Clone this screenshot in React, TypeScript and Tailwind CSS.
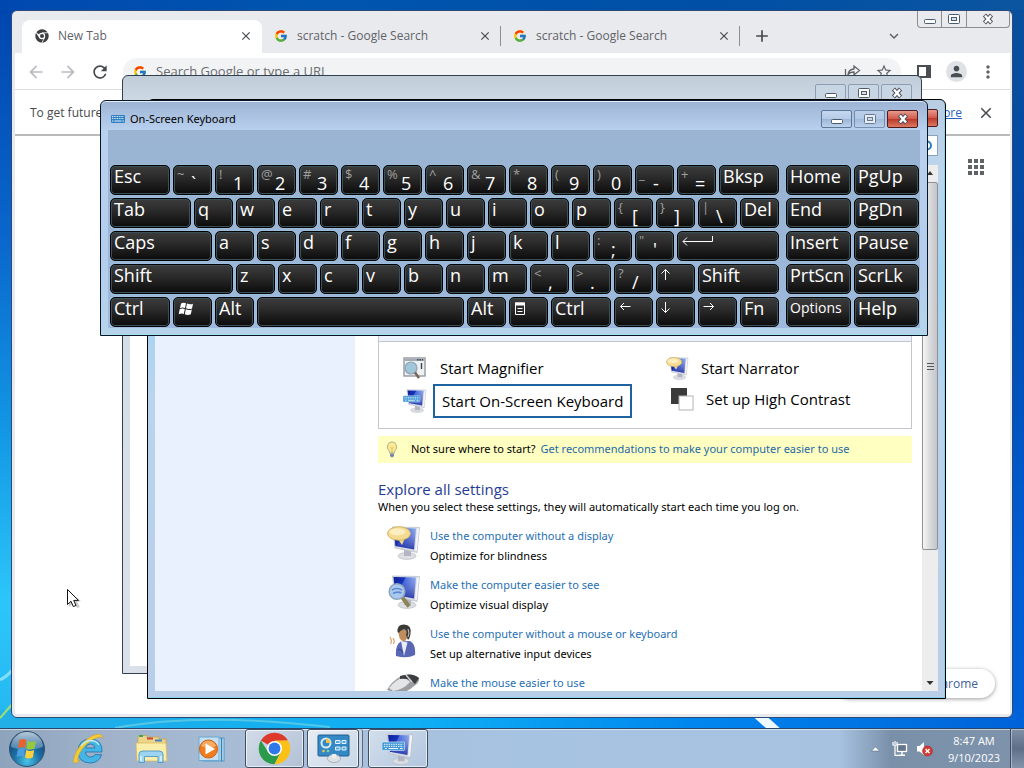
import React from "react";
import { FcGoogle } from "react-icons/fc";
import {
  MdAdd,
  MdApps,
  MdArrowBack,
  MdArrowForward,
  MdClose,
  MdExpandMore,
  MdMoreVert,
  MdPerson,
  MdRefresh,
  MdStarBorder,
} from "react-icons/md";

type KeySpec = {
  label?: string;
  shift?: string;
  icon?: React.ReactNode;
  name?: string;
  span?: string;
  small?: boolean;
};

/* ---------- drawings ---------- */

function Wallpaper() {
  return (
    <svg className="absolute inset-0 h-full w-full" viewBox="0 0 1024 768" preserveAspectRatio="none" aria-hidden="true">
      <defs>
        <linearGradient id="skyTop" x1="0" x2="1" y1="0" y2="0">
          <stop offset="0" stopColor="#0048b0" />
          <stop offset="0.3" stopColor="#0055ae" />
          <stop offset="0.7" stopColor="#004fa6" />
          <stop offset="1" stopColor="#0b55a0" />
        </linearGradient>
        <linearGradient id="skyLeft" x1="0" x2="0" y1="0" y2="1">
          <stop offset="0" stopColor="#0046ae" />
          <stop offset="0.3" stopColor="#0a66cc" />
          <stop offset="0.55" stopColor="#1296e4" />
          <stop offset="0.78" stopColor="#2cc6fa" />
          <stop offset="1" stopColor="#22b2ee" />
        </linearGradient>
        <linearGradient id="skyRight" x1="0" x2="0" y1="0" y2="1">
          <stop offset="0" stopColor="#0a4f9c" />
          <stop offset="0.3" stopColor="#0049a8" />
          <stop offset="0.7" stopColor="#005bd0" />
          <stop offset="1" stopColor="#0062d8" />
        </linearGradient>
        <linearGradient id="skyBottom" x1="0" x2="1" y1="0" y2="0">
          <stop offset="0" stopColor="#22aee6" />
          <stop offset="0.4" stopColor="#0fb0f4" />
          <stop offset="0.68" stopColor="#0086ee" />
          <stop offset="1" stopColor="#0062d8" />
        </linearGradient>
      </defs>
      <rect width="1024" height="768" fill="url(#skyTop)" />
      <rect y="10" width="16" height="758" fill="url(#skyLeft)" />
      <rect x="1004" y="10" width="20" height="758" fill="url(#skyRight)" />
      <rect y="710" width="1024" height="58" fill="url(#skyBottom)" />
      <path d="M0 680 Q8 676 14 668" stroke="#a8ecff" strokeWidth="3" fill="none" opacity=".7" />
      <path d="M0 718 L14 702" stroke="#9fe070" strokeWidth="2" fill="none" />
      <path d="M115 728 Q200 712 330 727" stroke="#8fe0e0" strokeWidth="2" fill="none" opacity=".5" />
      <path d="M748 712 L762 712 L782 730 L768 730Z" fill="#eef8ff" />
    </svg>
  );
}

function ChromeLogo({ size, mono }: { size: number; mono?: boolean }) {
  const red = mono ? "#3c4043" : "#dd3a2c";
  const green = mono ? "#3c4043" : "#2b9a4b";
  const yellow = mono ? "#3c4043" : "#fbc116";
  return (
    <svg width={size} height={size} viewBox="0 0 48 48" aria-hidden="true">
      <path d="M24 24 L4.1 12.5 A23 23 0 0 1 43.9 12.5 L24 13.5Z" fill={red} />
      <path d="M4.1 12.5 A23 23 0 0 0 24 47 L33.1 29.3 L24 34 L15 29.3Z" fill={green} />
      <path d="M43.9 12.5 A23 23 0 0 1 24 47 L33.1 29.3 L34 22 L24 12.5Z" fill={yellow} />
      {mono && (
        <path d="M24 13 H45 M15 29 L4 11 M33 29 L23 48" stroke="#fff" strokeWidth="2.5" fill="none" />
      )}
      <circle cx="24" cy="24" r="11" fill="#fff" />
      <circle cx="24" cy="24" r={mono ? 7 : 8.6} fill={mono ? "#3c4043" : "#2f78ea"} />
    </svg>
  );
}

function MonitorShape() {
  return (
    <>
      <defs>
        <linearGradient id="screen" x1="0" x2="1" y1="0" y2=".5">
          <stop offset="0" stopColor="#0b1c94" />
          <stop offset=".42" stopColor="#1733bc" />
          <stop offset=".46" stopColor="#4f74e0" />
          <stop offset="1" stopColor="#b9cdf8" />
        </linearGradient>
        <linearGradient id="screenFoot" x1="0" x2="0" y1="0" y2="1">
          <stop offset="0" stopColor="#2038b4" stopOpacity="0" />
          <stop offset="1" stopColor="#12239c" stopOpacity=".85" />
        </linearGradient>
      </defs>
      <ellipse cx="20" cy="30" rx="9" ry="3.4" fill="#dcdee3" stroke="#b3b6bf" strokeWidth=".6" />
      <path d="M17 23 L24 25 L24 30 L17 30Z" fill="#b2b6c2" />
      <path d="M5.500 1 L32.500 1.500 L30 26.500 L8 22Z" fill="#d7dbe4" stroke="#b6bbc8" strokeWidth=".7" />
      <path d="M6.500 2 L29 2.500 L27 23.500 L8.500 20Z" fill="url(#screen)" />
      <path d="M6.500 2 L29 2.500 L27 23.500 L8.500 20Z" fill="url(#screenFoot)" />
      <path d="M30 2.500 L32 2.500 L29.800 25 L28 24.500Z" fill="#f4f5f8" />
    </>
  );
}

function SpeechMonitor({ size }: { size: number }) {
  return (
    <svg width={size} height={size} viewBox="0 0 34 34" aria-hidden="true">
      <MonitorShape />
      <path d="M11 13 L15 19 L18 12Z" fill="#f4d98a" />
      <ellipse cx="12" cy="7.500" rx="11.500" ry="6.800" fill="#f6dc92" stroke="#c9a650" strokeWidth=".8" />
      <ellipse cx="10.500" cy="5.800" rx="8" ry="3.400" fill="#fbeec0" />
    </svg>
  );
}

function LensMonitor({ size }: { size: number }) {
  return (
    <svg width={size} height={size} viewBox="0 0 34 34" aria-hidden="true">
      <MonitorShape />
      <path d="M15 22 L22 31.500" stroke="#8d8458" strokeWidth="4" />
      <circle cx="10" cy="16.500" r="7.800" fill="#a9c9ee" stroke="#8fa6bc" strokeWidth="1.600" />
      <path d="M5 15 Q10 12 15 15 M6 18.500 Q10 16 14.500 18" stroke="#5b87d0" strokeWidth="1.600" fill="none" />
    </svg>
  );
}

function KeyboardMonitor({ size }: { size: number }) {
  return (
    <svg width={size} height={size} viewBox="0 0 34 34" aria-hidden="true">
      <MonitorShape />
      <rect x="0" y="9.500" width="24" height="9" rx="1" fill="#3e97d8" stroke="#fff" strokeWidth=".6" />
      <path d="M2 12 H22.500 M2 14.200 H22.500" stroke="#fff" strokeWidth="1" strokeDasharray="1.600 .9" />
      <path d="M3 16.500 H5 M7 16.500 H17 M19 16.500 H22" stroke="#fff" strokeWidth="1" />
    </svg>
  );
}

function PersonIcon() {
  return (
    <svg width="34" height="34" viewBox="0 0 34 34" aria-hidden="true">
      <path d="M9 32 Q8 21 14 17.500 L23 17 Q29 20 28 31 Q20 35 9 32Z" fill="#5866b4" />
      <path d="M14 17 L17 32 L20.500 18.500Z" fill="#e8eefc" />
      <path d="M11.500 6 Q11 16 16.500 17.500 Q21 17 21.500 6Z" fill="#c08e5c" />
      <path d="M10.500 8 Q10 .5 17 .6 Q25 .8 23.500 10 Q23 14 21 16 L19 11 Q21 6 17 5.500 Q13 6 12 9Z" fill="#3b3a38" />
      <path d="M21 5 Q23 9 21 13" stroke="#c9c9c9" strokeWidth="1" fill="none" />
      <path d="M6 14 Q8 16.500 6.500 20 M3 13 Q5.500 17 3.500 20" stroke="#d9a56a" strokeWidth="1.200" fill="none" />
      <path d="M11 26 Q14 24 16 29" stroke="#3d4b96" strokeWidth="1.200" fill="none" />
    </svg>
  );
}

function MouseIcon() {
  return (
    <svg width="34" height="34" viewBox="0 0 34 34" aria-hidden="true">
      <path d="M0 17 Q4 9 14 3 Q26 -1 32 5 Q33 9 27 13 Q20 20 10 20Z" fill="#9b9da1" />
      <path d="M2 15 Q8 7 17 4 L23 9 Q16 17 6 18Z" fill="#e2e4e6" />
      <path d="M13 3 Q25 -1 32 5 L28 11 Q23 5 13 6Z" fill="#3c3e41" />
      <path d="M19 2 L25 9" stroke="#d8d8d8" strokeWidth="1.400" />
    </svg>
  );
}

function MagnifierIcon() {
  return (
    <svg width="24" height="22" viewBox="0 0 24 22" aria-hidden="true">
      <rect x="1" y="1" width="21" height="18" fill="#eef0f2" stroke="#949ba3" strokeWidth="1.4" />
      <path d="M2 3 H21" stroke="#a2aab4" strokeWidth="2" />
      <path d="M14 2.800 H20" stroke="#3f4a57" strokeWidth="1.4" strokeDasharray="1.500 1" />
      <path d="M18.500 6 V12" stroke="#39424e" strokeWidth="1.400" />
      <circle cx="8" cy="11" r="6" fill="#9fc6da" stroke="#8fa3b0" strokeWidth="1.200" />
      <path d="M12 15.500 L16 21" stroke="#77685c" strokeWidth="2.600" />
    </svg>
  );
}

function ContrastIcon() {
  return (
    <svg width="23" height="23" viewBox="0 0 23 23" aria-hidden="true">
      <rect x="0" y="0" width="16" height="16" fill="#3a3a3a" />
      <rect x="8" y="8" width="14" height="14" fill="#fff" stroke="#b4b4b4" />
    </svg>
  );
}

function BulbIcon() {
  return (
    <svg width="12" height="17" viewBox="0 0 12 17" aria-hidden="true">
      <path d="M6 .8 A5 5 0 0 1 9 9.500 L8.300 12 H3.700 L3 9.500 A5 5 0 0 1 6 .8Z" fill="#fbea94" stroke="#a9a88e" strokeWidth=".9" />
      <path d="M4.500 6 L6 8 L7.500 6 M6 8 V12" stroke="#d9b64a" strokeWidth=".8" fill="none" />
      <path d="M4 12.500 H8 V15 L6.800 16.300 H5.200 L4 15Z" fill="#7b86a8" />
    </svg>
  );
}

function KeyboardIcon() {
  return (
    <svg width="14" height="8" viewBox="0 0 14 8" aria-hidden="true">
      <rect width="14" height="8" rx="1" fill="#2f80c4" />
      <path d="M1 1.500 H13 M1 3.500 H13" stroke="#dff0fb" strokeWidth="1" strokeDasharray="1 .7" />
      <path d="M1 6 H2.500 M3.500 6 H10.500 M11.500 6 H13" stroke="#dff0fb" strokeWidth="1" />
    </svg>
  );
}

function StartOrb() {
  return (
    <svg width="38" height="38" viewBox="0 0 38 38" aria-hidden="true">
      <defs>
        <radialGradient id="orb" cx=".5" cy=".85" r=".85">
          <stop offset="0" stopColor="#49c4e8" />
          <stop offset=".45" stopColor="#1c6ea4" />
          <stop offset="1" stopColor="#123a66" />
        </radialGradient>
        <linearGradient id="gloss" x1="0" x2="0" y1="0" y2="1">
          <stop offset="0" stopColor="#e2eef8" stopOpacity=".8" />
          <stop offset="1" stopColor="#a8c8e0" stopOpacity=".35" />
        </linearGradient>
      </defs>
      <circle cx="19" cy="19" r="17.500" fill="url(#orb)" stroke="#31516f" />
      <path d="M3 17 A16 15 0 0 1 35 17 Q19 23 3 17Z" fill="url(#gloss)" />
      <path d="M11.500 10 Q15 8 18.300 10 L17 18 Q13.500 16 10 18Z" fill="#e8622c" />
      <path d="M19.700 10.500 Q23 13 28 11 L26.500 18.500 Q22 20.500 18.400 18.500Z" fill="#96c83c" />
      <path d="M9.800 19.500 Q13 17.600 16.800 19.500 L15.500 27 Q12 25 8.500 27Z" fill="#4b9fe0" />
      <path d="M18.200 20 Q22 22 26.200 20 L24.800 27.500 Q20.500 29.500 17 27.500Z" fill="#fbd03c" />
    </svg>
  );
}

function ExplorerE() {
  return (
    <svg width="34" height="34" viewBox="0 0 34 34" aria-hidden="true">
      <path
        d="M30 20 H13.500 Q14 25 18.500 25 Q21.500 25 23 22.700 H29.600 Q27 31 18 31 Q6 30.500 6 19 Q6.500 7.500 18 7 Q31 7.500 30 20Z M13.700 16 H23 Q22.500 12 18.500 12 Q14.300 12 13.700 16Z"
        fill="#45b5e6"
        stroke="#2578ac"
        strokeWidth=".9"
        fillRule="evenodd"
      />
      <path d="M6.500 29.500 Q0 34 2 26 Q5 13 19 4.500 Q30 -1 31 6.500 Q29 2.800 20 8 Q8 16 5.500 27 Q5.500 30 8 28Z" fill="#f4cc34" stroke="#d09c1c" strokeWidth=".5" />
      <path d="M9 14 Q13 8.500 19 8.500 Q25 9 27 13" stroke="#c0ecfc" strokeWidth="1.300" fill="none" />
    </svg>
  );
}

function FolderIcon() {
  return (
    <svg width="33" height="30" viewBox="0 0 33 30" aria-hidden="true">
      <path d="M3 4 V1.500 H12 V4 H15 V3 H24 V5 H31 V26 H2Z" fill="#ecd489" stroke="#c5a552" strokeWidth=".8" />
      <path d="M4 2 H8" stroke="#3aa65c" strokeWidth="2" />
      <path d="M12 4.500 H18" stroke="#cf4632" strokeWidth="2" />
      <path d="M20 6.500 H27" stroke="#3f85c8" strokeWidth="2" />
      <path d="M1 9 H31 L32 27 H2Z" fill="#fbedaa" stroke="#d8bb62" strokeWidth=".8" />
      <path d="M4 28.500 V20 Q4 17 8 17 H24 Q28 17 28 20 V28.500 H23 V22.500 H9.500 V28.500Z" fill="#9cd4f2" stroke="#4f98c4" strokeWidth=".9" />
      <path d="M6 22 V27 M26 22 V27" stroke="#e4f6ff" strokeWidth="1.500" />
    </svg>
  );
}

function MediaPlayer() {
  return (
    <svg width="28" height="26" viewBox="0 0 28 26" aria-hidden="true">
      <rect x="5" y="2" width="21" height="23" fill="#d2e6f4" stroke="#4f9ac8" />
      <path d="M23.500 2 V25" stroke="#2f83bc" strokeWidth="1.500" />
      <rect x="1" y="1" width="20" height="23.500" fill="#c3e0f4" stroke="#6aaad2" />
      <circle cx="10.500" cy="13" r="9" fill="#ee7d20" stroke="#d45f10" />
      <path d="M3 10 A8 8 0 0 1 18 10 Q11 14 3 10Z" fill="#f8ab62" />
      <path d="M7.500 7.500 L17 13 L7.500 18.500Z" fill="#fff" />
    </svg>
  );
}

function ControlPanelIcon() {
  return (
    <svg width="33" height="29" viewBox="0 0 33 29" aria-hidden="true">
      <rect x="1" y="1" width="31" height="21" rx="1" fill="#3489c4" stroke="#1d5f92" />
      <circle cx="9" cy="9" r="4.500" fill="none" stroke="#d8ecf8" strokeWidth="2" />
      <path d="M9 4.500 A4.500 4.500 0 0 1 13.500 9 H9Z" fill="#f3c14a" />
      <path d="M18.500 6.500 H23 V9.500 H18.500Z M25 6.500 H29 V9.500 H25Z M18.500 13 H23 V16 H18.500Z M25 13 H29 V16 H25Z" fill="#5aa9dc" stroke="#e3f2fb" strokeWidth="1" />
      <circle cx="6.500" cy="17" r="1.300" fill="#f3c14a" />
      <circle cx="11" cy="17" r="1.300" fill="#7fd0a4" />
      <ellipse cx="17" cy="24.500" rx="6.500" ry="4" fill="#dfe2e6" stroke="#9ba2aa" strokeWidth=".8" />
      <path d="M15 20 H19 V24 H15Z" fill="#eceef0" />
    </svg>
  );
}

function FlagGlyph() {
  return (
    <svg width="16" height="14" viewBox="0 0 16 14" aria-hidden="true">
      <path d="M3 1.500 Q5.500 0 8 1.200 L7 6 Q4.500 5 2 6.200Z M9 1.500 Q12 3 15 1.700 L14 6.500 Q11 7.600 8 6.300Z M1.700 7.200 Q4.500 6 6.800 7 L5.800 12 Q3.500 11 .7 12.200Z M7.800 7.300 Q10.500 8.600 13.800 7.500 L12.800 12.300 Q9.500 13.500 6.800 12.300Z" fill="#fff" />
    </svg>
  );
}

function MenuGlyph() {
  return (
    <svg width="12" height="14" viewBox="0 0 12 14" aria-hidden="true">
      <path d="M1.500 1 H10.500 V12.500 H1.500Z M3.500 6.500 H8.500 M3.500 9.500 H8.500" stroke="#fff" fill="none" />
      <path d="M1 .5 H11 V3.500 H1Z" fill="#fff" />
    </svg>
  );
}

function ArrowGlyph({ d, w = 12, h = 12 }: { d: string; w?: number; h?: number }) {
  return (
    <svg width={w} height={h} viewBox={`0 0 ${w} ${h}`} aria-hidden="true">
      <path d={d} stroke="#fff" fill="none" />
    </svg>
  );
}

function NetworkIcon() {
  return (
    <svg width="16" height="16" viewBox="0 0 16 16" aria-hidden="true">
      <rect x="5.500" y="3.500" width="9" height="7" fill="#64748a" stroke="#fff" strokeWidth="1.300" />
      <path d="M10 11 V14 M7 14.300 H13" stroke="#fff" strokeWidth="1.400" />
      <path d="M1 1 V4 H5 V1 M3 4 V14.300 H7 M3 0 V3" stroke="#fff" strokeWidth="1.200" fill="none" />
    </svg>
  );
}

function VolumeIcon() {
  return (
    <svg width="18" height="16" viewBox="0 0 18 16" aria-hidden="true">
      <path d="M1 5 H3.500 L8 1 V14 L3.500 10.500 H1Z" fill="#fff" />
      <circle cx="11.500" cy="10" r="5" fill="#d23a34" stroke="#b02020" strokeWidth=".5" />
      <path d="M9.500 8 L13.500 12 M13.500 8 L9.500 12" stroke="#fff" strokeWidth="1.500" />
    </svg>
  );
}

/* ---------- caption buttons ---------- */

function CaptionGlyph({ kind }: { kind: "min" | "max" | "close" }) {
  return (
    <svg width="14" height="12" viewBox="0 0 14 12" aria-hidden="true">
      {kind === "min" && <rect x="1.500" y="6.500" width="11" height="4" rx="1" fill="#fff" stroke="#4b5a6c" />}
      {kind === "max" && (
        <>
          <rect x="1.500" y="1.500" width="11" height="9" rx="1" fill="#fff" stroke="#4b5a6c" />
          <rect x="4.500" y="4.500" width="5" height="3" fill="#d9e2ec" stroke="#4b5a6c" />
        </>
      )}
      {kind === "close" && (
        <>
          <path d="M3.500 2 L10.500 10 M10.500 2 L3.500 10" stroke="#4b4f58" strokeWidth="4.200" />
          <path d="M4 2.500 L10 9.500 M10 2.500 L4 9.500" stroke="#fff" strokeWidth="2.400" />
        </>
      )}
    </svg>
  );
}

function CaptionButtons({ active, owner }: { active?: boolean; owner: string }) {
  const plain = active
    ? "border-[#5d7799] bg-[linear-gradient(#c6d8f0,#b4cae6_50%,#9db6d6_51%,#bcd2ec)]"
    : "border-[#8d9eb2] bg-[#c8d5e2]";
  const close = active
    ? "border-[#4d1a1e] bg-[linear-gradient(#e59a8c,#d2584a_50%,#b93a2a_51%,#dd7a62)]"
    : "border-[#8d9eb2] bg-[#c8d5e2]";
  const base = "flex h-[18px] w-[31px] items-center justify-center rounded-[2px] border";
  return (
    <div className="flex gap-[2px]">
      <button aria-label={`Minimize ${owner}`} className={`${base} ${plain}`}>
        <CaptionGlyph kind="min" />
      </button>
      <button aria-label={`Maximize ${owner}`} className={`${base} ${plain} ${active ? "opacity-70" : ""}`}>
        <CaptionGlyph kind="max" />
      </button>
      <button aria-label={`Close ${owner}`} className={`${base} ${close}`}>
        <CaptionGlyph kind="close" />
      </button>
    </div>
  );
}

/* ---------- browser ---------- */

function BrowserTab({ title, active }: { title: string; active?: boolean }) {
  return (
    <div
      className={
        active
          ? "flex h-[33px] w-[240px] items-center rounded-t-lg bg-white pr-[9px] pb-[2px] pl-[13px]"
          : "flex h-[33px] w-[238px] items-center pr-[8px] pb-[2px] pl-[12px]"
      }
    >
      {active ? <ChromeLogo size={14} mono /> : <FcGoogle size={14} />}
      <span className="ml-[9px] flex-1 text-[12px] text-[#5f6368]">{title}</span>
      <button aria-label={`Close tab ${title}`} className="text-[#45494d]">
        <MdClose size={14} />
      </button>
    </div>
  );
}

function Browser() {
  return (
    <section
      aria-label="Browser"
      className="absolute top-[10px] right-[11px] bottom-[50px] left-[11px] flex flex-col rounded-md border border-[#2a4a78] bg-[#e9eaee] font-['Open_Sans','Noto_Sans',sans-serif]"
    >
      <div className="flex h-[42px] shrink-0 items-end pl-[10px]">
        <BrowserTab title="New Tab" active />
        <BrowserTab title="scratch - Google Search" />
        <span className="mb-[7px] h-5 w-px bg-[#8b8f94]" />
        <BrowserTab title="scratch - Google Search" />
        <span className="mb-[7px] h-5 w-px bg-[#8b8f94]" />
        <button aria-label="New tab" className="mb-[7px] ml-[12px] text-[#45494d]">
          <MdAdd size={20} />
        </button>
        <span className="flex-1" />
        <button aria-label="Search tabs" className="mb-[8px] mr-[14px] text-[#5f6368]">
          <MdExpandMore size={18} />
        </button>
        <div className="mr-[2px] flex h-[17px] self-start rounded-b border border-t-0 border-[#8a8d92]">
          <button aria-label="Minimize browser" className="flex w-[24px] items-center justify-center border-r border-[#8a8d92]">
            <CaptionGlyph kind="min" />
          </button>
          <button aria-label="Maximize browser" className="flex w-[25px] items-center justify-center border-r border-[#8a8d92]">
            <CaptionGlyph kind="max" />
          </button>
          <button aria-label="Close browser" className="flex w-[42px] items-center justify-center">
            <CaptionGlyph kind="close" />
          </button>
        </div>
      </div>

      <div className="mr-[2px] mb-[3px] ml-[3px] flex min-h-0 flex-1 flex-col bg-white">
        <div className="flex h-[37px] shrink-0 items-center border-b border-[#dcdee1] pt-px pr-[12px] pl-[11px] text-[#5f6368]">
          <button aria-label="Back" className="text-[#b9bcc0]">
            <MdArrowBack size={20} />
          </button>
          <button aria-label="Forward" className="ml-[12px] text-[#b9bcc0]">
            <MdArrowForward size={20} />
          </button>
          <button aria-label="Reload" className="ml-[12px] text-[#45494d]">
            <MdRefresh size={20} />
          </button>
          <div className="ml-[13px] flex h-7 flex-1 items-center rounded-full bg-[#f1f3f4] pr-[8px] pl-[10px]">
            <FcGoogle size={14} />
            <input
              aria-label="Address and search bar"
              placeholder="Search Google or type a URL"
              className="ml-[9px] min-w-0 flex-1 bg-transparent text-[13px] placeholder:text-[#6a6e73]"
            />
            <button aria-label="Share">
              <svg width="17" height="16" viewBox="0 0 17 16" aria-hidden="true">
                <path d="M1.500 5 V14.500 H13 V11 M4 10.500 Q4.500 5.500 10 5 V2 L15.500 6.500 L10 11 V8 Q6 8 4 10.500Z" fill="none" stroke="#5f6368" strokeWidth="1.300" />
              </svg>
            </button>
            <button aria-label="Bookmark" className="ml-[14px]">
              <MdStarBorder size={18} />
            </button>
          </div>
          <button aria-label="Side panel" className="ml-[16px] flex h-[13px] w-[14px] border-[2px] border-r-[5px] border-[#4a4d51]" />
          <button aria-label="Profile" className="ml-[15px] flex h-[21px] w-[21px] items-center justify-center rounded-full bg-[#dee1e6] text-[#4a4d51]">
            <MdPerson size={17} />
          </button>
          <button aria-label="Menu" className="ml-[11px]">
            <MdMoreVert size={20} />
          </button>
        </div>
        <div className="flex h-[46px] shrink-0 items-center border-b-2 border-[#b9babc] pt-[2px] pr-[15px] pl-[15px] text-[12px] text-[#45494d]">
          <span className="flex-1">To get future</span>
          <a href="#learn" className="text-[#2a64bf] underline">
            Learn more
          </a>
          <button aria-label="Dismiss" className="ml-[15px] text-[#45494d]">
            <MdClose size={18} />
          </button>
        </div>
        <div className="flex flex-1 flex-col items-end justify-between pr-[15px] pb-[16px]">
          <button aria-label="Google apps" className="mt-[19px] mr-[7px] text-[#5f6368]">
            <MdApps size={24} />
          </button>
          <button className="h-[29px] rounded-full bg-white pr-[17px] pl-9 text-[12px] text-[#41609c] shadow-[0_1px_4px_rgba(0,0,0,0.4)]">
            Customize Chrome
          </button>
        </div>
      </div>
    </section>
  );
}

/* ---------- ease of access ---------- */

const settings: { title: string; note?: string; icon: React.ReactNode }[] = [
  { title: "Use the computer without a display", note: "Optimize for blindness", icon: <SpeechMonitor size={34} /> },
  { title: "Make the computer easier to see", note: "Optimize visual display", icon: <LensMonitor size={34} /> },
  { title: "Use the computer without a mouse or keyboard", note: "Set up alternative input devices", icon: <PersonIcon /> },
  { title: "Make the mouse easier to use", icon: <MouseIcon /> },
];

function EaseOfAccess() {
  return (
    <section
      aria-label="Ease of Access"
      className="absolute top-[99px] left-[147px] flex h-[600px] w-[799px] flex-col rounded-t-md border border-black bg-[linear-gradient(#b8cde2,#bcd6ee_12%,#9fd4f2_30%,#b9d4ee_50%,#b8cde8)] px-[7px] pb-[7px] font-['Noto_Sans','Open_Sans',sans-serif] text-[11px] shadow-[inset_-1px_-1px_0_#86d4ec]"
    >
      <div className="flex h-[35px] shrink-0 justify-end pt-[9px]">
        <CaptionButtons active owner="Ease of Access" />
      </div>
      <div className="flex h-[30px] shrink-0 justify-end">
        <div className="flex h-[21px] w-[180px] items-center justify-end border border-[#8aa4c0] bg-white pr-1">
          <svg width="12" height="12" viewBox="0 0 12 12" aria-hidden="true">
            <circle cx="6" cy="5.500" r="4" fill="none" stroke="#2d7ec0" strokeWidth="2" />
          </svg>
        </div>
      </div>
      <div className="flex min-h-0 flex-1 bg-white">
        <aside className="w-[200px] shrink-0 bg-[#e8f1fd]" />
        <main className="min-w-0 flex-1 overflow-hidden pr-[10px] pl-[23px]">
          <div className="mt-[19px] flex h-[245px] flex-col border border-[#c4c6cc]">
            <div className="h-[157px] shrink-0 border-b border-[#c4c6cc] bg-[#edf1fb]" />
            <div className="flex flex-1 pt-[10px] font-['Open_Sans','Noto_Sans',sans-serif] text-[15px] text-black">
              <div className="w-[287px] pl-[24px]">
                <button className="flex h-[32px] items-center gap-[13px]">
                  <MagnifierIcon />
                  <span>Start Magnifier</span>
                </button>
                <button className="flex h-[34px] items-center gap-[6px]">
                  <KeyboardMonitor size={24} />
                  <span className="flex h-[34px] items-center border-2 border-[#1e62a0] px-[7px]">Start On-Screen Keyboard</span>
                </button>
              </div>
              <div>
                <button className="flex h-[32px] items-center gap-[12px]">
                  <SpeechMonitor size={23} />
                  <span>Start Narrator</span>
                </button>
                <button className="ml-[5px] flex h-[30px] items-center gap-[12px]">
                  <ContrastIcon />
                  <span>Set up High Contrast</span>
                </button>
              </div>
            </div>
          </div>
          <div className="mt-[7px] flex h-[27px] items-center bg-[#ffffc2] pl-[8px]">
            <BulbIcon />
            <span className="ml-[13px]">Not sure where to start?</span>
            <a href="#recommend" className="ml-[5px] text-[#1c6aa4]">
              Get recommendations to make your computer easier to use
            </a>
          </div>
          <h2 className="mt-[16px] font-['Open_Sans','Noto_Sans',sans-serif] text-[15px] leading-5 text-[#1f3d94]">Explore all settings</h2>
          <p className="leading-4">When you select these settings, they will automatically start each time you log on.</p>
          <ul className="mt-[11px] pl-[9px]">
            {settings.map((s) => (
              <li key={s.title} className="flex h-[49px] gap-[9px]">
                {s.icon}
                <div>
                  <a href="#setting" className="block leading-5 text-[#1f70b4]">
                    {s.title}
                  </a>
                  {s.note && <p className="leading-5">{s.note}</p>}
                </div>
              </li>
            ))}
          </ul>
        </main>
        <div className="flex w-[16px] shrink-0 flex-col items-center bg-[#ededee]">
          <svg width="8" height="17" viewBox="0 0 8 17" aria-hidden="true">
            <path d="M1 10 L4 6 L7 10Z" fill="#333" />
          </svg>
          <div className="flex h-[368px] w-[16px] flex-col items-center justify-center gap-[2px] rounded-[2px] border border-[#8f9194] bg-[linear-gradient(90deg,#f6f6f6,#d9dadc_50%,#c4c5c9)]">
            <span className="h-px w-[7px] bg-[#55585c]" />
            <span className="h-px w-[7px] bg-[#55585c]" />
            <span className="h-px w-[7px] bg-[#55585c]" />
          </div>
          <span className="flex-1" />
          <svg width="8" height="17" viewBox="0 0 8 17" aria-hidden="true">
            <path d="M.5 7 L4 11 L7.500 7Z" fill="#333" />
          </svg>
        </div>
      </div>
    </section>
  );
}

/* ---------- on-screen keyboard ---------- */

const one = "col-span-2";
const letters = (s: string): KeySpec[] => s.split("").map((c) => ({ label: c }));
const pairs = (s: string): KeySpec[] => s.split(" ").map((p) => ({ shift: p[0], label: p[1] }));

const rows: KeySpec[][] = [
  [{ label: "Esc", span: "col-span-3" }, ...pairs("~` !1 @2 #3 $4 %5 ^6 &7 *8 (9 )0 _- +="), { label: "Bksp", span: "col-span-3" }],
  [{ label: "Tab", span: "col-span-4" }, ...letters("qwertyuiop"), ...pairs("{[ }] |\\"), { label: "Del" }],
  [
    { label: "Caps", span: "col-span-5" },
    ...letters("asdfghjkl"),
    ...pairs(":; \"'"),
    { name: "Enter", icon: <ArrowGlyph w={34} h={12} d="M30.500 0 V5.500 H1 M5 1.500 L1 5.500 L5 9.500" />, span: "col-span-5" },
  ],
  [
    { label: "Shift", span: "col-span-6" },
    ...letters("zxcvbnm"),
    ...pairs("<, >. ?/"),
    { name: "Up", icon: <ArrowGlyph d="M4.500 11 V.500 M.500 4.500 L4.500 .500 L8.500 4.500" /> },
    { label: "Shift", span: "col-span-4" },
  ],
  [
    { label: "Ctrl", span: "col-span-3" },
    { name: "Windows", icon: <FlagGlyph /> },
    { label: "Alt" },
    { name: "Space", span: "col-span-10" },
    { label: "Alt" },
    { name: "Application menu", icon: <MenuGlyph /> },
    { label: "Ctrl", span: "col-span-3" },
    { name: "Left", icon: <ArrowGlyph d="M11.500 4.500 H1.500 M5 1 L1.500 4.500 L5 8" /> },
    { name: "Down", icon: <ArrowGlyph d="M4.500 0 V10.500 M.500 6.500 L4.500 10.500 L8.500 6.500" /> },
    { name: "Right", icon: <ArrowGlyph d="M.5 4.500 H10.500 M7 1 L10.500 4.500 L7 8" /> },
    { label: "Fn" },
  ],
];

const sideKeys: KeySpec[] = [
  { label: "Home" },
  { label: "PgUp" },
  { label: "End" },
  { label: "PgDn" },
  { label: "Insert" },
  { label: "Pause" },
  { label: "PrtScn" },
  { label: "ScrLk" },
  { label: "Options", small: true },
  { label: "Help" },
];

function Key({ k, span }: { k: KeySpec; span: string }) {
  return (
    <button
      aria-label={k.name}
      className={`${span} flex h-[30px] min-w-0 items-start rounded-[5px] border border-black bg-[linear-gradient(#3c3c3c,#2b2b2b_40%,#0b0b0b)] pl-[3px] text-[18px] leading-[20px] text-white shadow-[inset_0_0_0_1px_#3c5058,0_0_0_1px_rgba(160,205,230,0.3)]`}
    >
      {k.shift ? (
        <>
          <span className="min-w-[14px] text-left text-[13px] leading-[17px] text-[#a0a0a0]">{k.shift}</span>
          <span className="self-end leading-[21px]">{k.label}</span>
        </>
      ) : k.icon ? (
        <span className="pt-[4px] pl-px">{k.icon}</span>
      ) : (
        <span className={k.small ? "text-[14px]" : ""}>{k.label}</span>
      )}
    </button>
  );
}

function OnScreenKeyboard() {
  return (
    <section
      aria-label="On-Screen Keyboard"
      className="absolute top-[100px] left-[100px] w-[828px] rounded-t-md border border-[#061626] bg-[linear-gradient(#9db3d4,#b9d1ee_30px,#b4cdec_70%,#b5d4ea)] px-[7px] pb-[7px] font-['Open_Sans','Noto_Sans',sans-serif] shadow-[inset_0_1px_0_#e4eefa,inset_0_-1px_0_#a8e0f0]"
    >
      <header className="flex h-[29px] items-center gap-[5px] pt-[6px] pr-[2px] pl-[3px]">
        <KeyboardIcon />
        <h1 className="flex-1 font-['Noto_Sans','Open_Sans',sans-serif] text-[11px] leading-4 text-black">On-Screen Keyboard</h1>
        <CaptionButtons active owner="keyboard" />
      </header>
      <div className="grid grid-cols-[669fr_133fr] gap-[7px] bg-[linear-gradient(#9ab4d2,#9ab4d4_40%,#9fb9de)] pt-[35px] pr-px pb-px pl-[2px]">
        <div className="grid grid-cols-[repeat(32,minmax(0,1fr))] gap-[3px]">
          {rows.flat().map((k, i) => (
            <Key key={i} k={k} span={k.span ?? one} />
          ))}
        </div>
        <div className="grid grid-cols-2 gap-[3px]">
          {sideKeys.map((k) => (
            <Key key={k.label} k={k} span="col-span-1" />
          ))}
        </div>
      </div>
    </section>
  );
}

/* ---------- taskbar ---------- */

function Taskbar() {
  const open = "flex h-[39px] items-center justify-center rounded-[3px] border border-[#3f4f63] shadow-[inset_0_0_0_1px_rgba(255,255,255,0.65)]";
  return (
    <nav
      aria-label="Taskbar"
      className="absolute inset-x-0 bottom-0 flex h-10 items-center border-t border-[#27466e] bg-[linear-gradient(90deg,#8ea3bc,#9fb2ca_10%,#a9bdd6_25%,#a6c3e1_50%,#a6c2e0_82%,#7a90a9_87%,#7e93ab)] font-['Open_Sans','Noto_Sans',sans-serif] shadow-[inset_0_1px_0_rgba(255,255,255,0.55)]"
    >
      <button aria-label="Start" className="ml-[8px]">
        <StartOrb />
      </button>
      <button aria-label="Internet Explorer" className="ml-[26px]">
        <ExplorerE />
      </button>
      <button aria-label="File Explorer" className="ml-[29px]">
        <FolderIcon />
      </button>
      <button aria-label="Media Player" className="ml-[30px]">
        <MediaPlayer />
      </button>
      <button aria-label="Chrome" className={`${open} ml-[19px] w-[59px] bg-[linear-gradient(135deg,#d2dbe8,#b2c1d6)]`}>
        <ChromeLogo size={33} />
      </button>
      <button aria-label="Control Panel" className={`${open} ml-[3px] w-[52px] bg-[linear-gradient(135deg,#e6edf5,#c8d6e6)]`}>
        <ControlPanelIcon />
      </button>
      <span className="h-[39px] w-[4px] rounded-r-[3px] border-r border-[#5a6a80] bg-[#c6d3e2]" />
      <button aria-label="Keyboard" className={`${open} ml-[5px] w-[60px] bg-[linear-gradient(135deg,#d2deec,#b2c6de)]`}>
        <KeyboardMonitor size={32} />
      </button>
      <span className="flex-1" />
      <button aria-label="Hidden icons" className="mr-[12px]">
        <svg width="9" height="6" viewBox="0 0 9 6" aria-hidden="true">
          <path d="M.5 5 L4.500 .8 L8.500 5Z" fill="#fff" stroke="#52647a" strokeWidth=".5" />
        </svg>
      </button>
      <button aria-label="Network">
        <NetworkIcon />
      </button>
      <button aria-label="Volume muted" className="ml-[8px]">
        <VolumeIcon />
      </button>
      <time className="ml-[10px] w-[60px] text-center text-[11px] leading-[17px] text-white">
        8:47 AM
        <br />
        9/10/2023
      </time>
      <button aria-label="Show desktop" className="ml-[6px] h-full w-[14px] border-l border-[#3d4c60] bg-[linear-gradient(#7d90a8,#5e7088_50%,#8295ab)] shadow-[inset_1px_1px_0_rgba(255,255,255,0.4)]" />
    </nav>
  );
}

export default function App() {
  return (
    <div className="relative h-screen w-full overflow-hidden bg-[#0050a8]">
      <Wallpaper />
      <Browser />
      <section
        aria-label="Background window"
        className="absolute top-[75px] left-[122px] flex h-[599px] w-[800px] flex-col rounded-t-md border border-[#35404e] bg-[linear-gradient(#c0ccd8,#d0dbe6_30px,#dbe1ea)] px-[7px] pb-[7px]"
      >
        <div className="flex h-[30px] shrink-0 justify-end pt-[8px] pr-[2px]">
          <CaptionButtons owner="background window" />
        </div>
        <div className="flex-1 bg-white" />
      </section>
      <EaseOfAccess />
      <OnScreenKeyboard />
      <Taskbar />
      <svg className="absolute top-[588px] left-[66px]" width="16" height="22" viewBox="0 0 16 22" aria-hidden="true">
        <path d="M3 4 V19 L8 15 L11 20 L14 19 L11 14 L15 13Z" fill="#000" opacity=".2" />
        <path d="M1.500 1.500 V16.500 L5 13.300 L7.300 18.600 L10 17.400 L7.700 12.400 H12.500Z" fill="#fff" stroke="#111" />
      </svg>
    </div>
  );
}
